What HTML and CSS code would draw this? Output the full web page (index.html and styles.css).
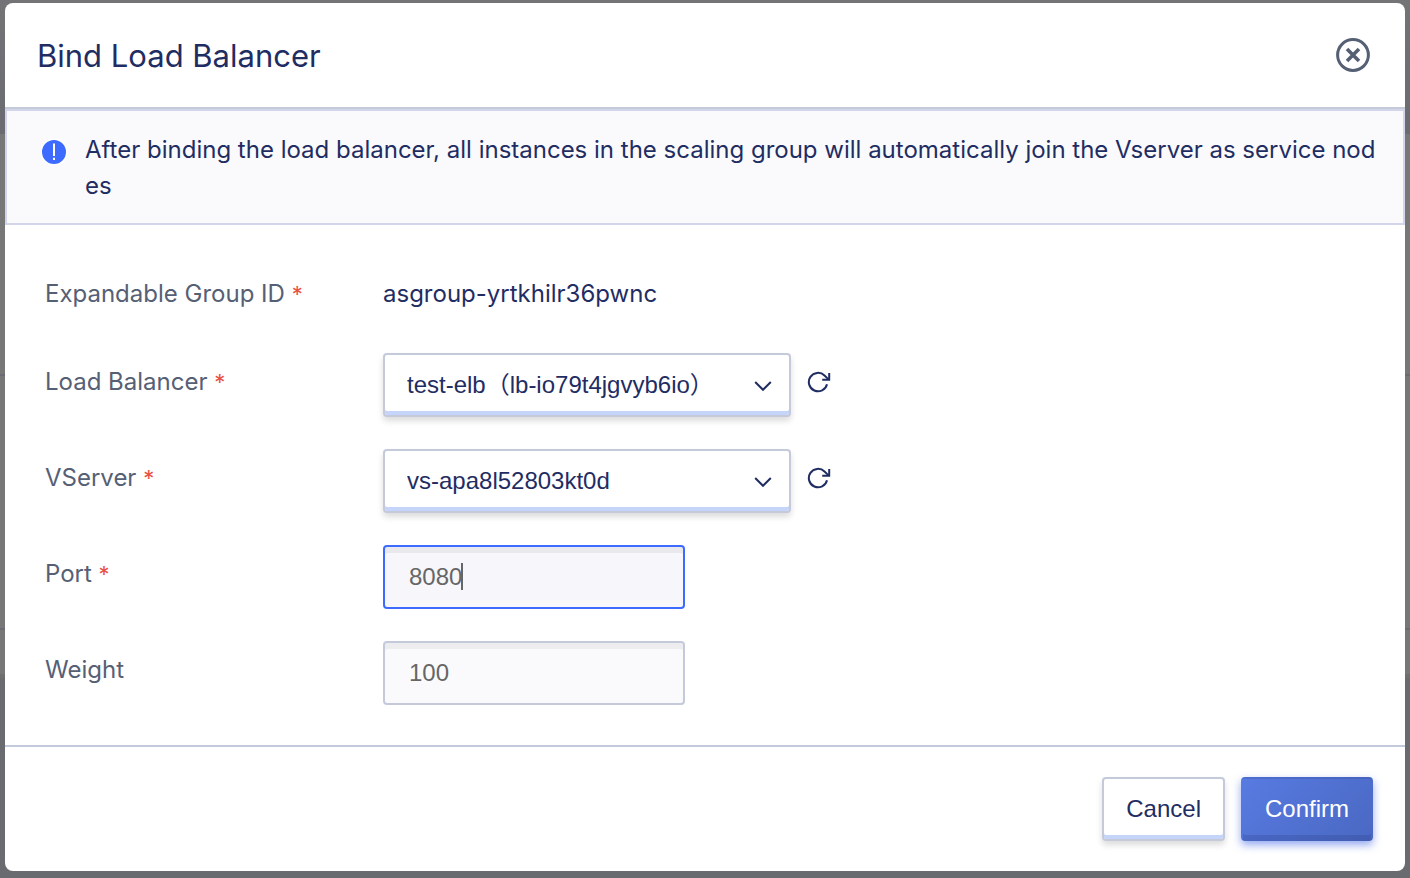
FILE: index.html
```html
<!DOCTYPE html>
<html lang="en">
<head>
<meta charset="utf-8">
<meta name="viewport" content="width=device-width, initial-scale=1">
<title>Bind Load Balancer</title>
<link rel="stylesheet" href="styles.css">
</head>
<body>
<main class="dialog" role="dialog" aria-labelledby="dialog-title">
  <header class="dialog-header">
    <h1 class="dialog-title" id="dialog-title">Bind Load Balancer</h1>
    <button class="icon-button" type="button" aria-label="Close">
      <svg class="close-icon" viewBox="0 0 34 34" aria-hidden="true"><circle cx="17" cy="17" r="15.4"/><path class="close-cross" d="M11 11 L23 23 M23 11 L11 23"/></svg>
    </button>
  </header>
  <div class="notice">
    <svg class="notice-icon" viewBox="0 0 26 26" aria-hidden="true"><circle cx="13" cy="13" r="13"/><path d="M13 4.500 V17"/><path d="M13 18.7 V21"/></svg>
    <p class="notice-text">After binding the load balancer, all instances in the scaling group will automatically join the Vserver as service nodes</p>
  </div>
  <form class="form" id="bind-form">
    <div class="row">
      <span class="label">Expandable Group ID <span class="required">*</span></span>
      <span class="value">asgroup-yrtkhilr36pwnc</span>
    </div>
    <div class="row">
      <label class="label" for="balancer">Load Balancer <span class="required">*</span></label>
      <div class="control">
        <div class="select-box">
          <select class="select" id="balancer"><option>test-elb（lb-io79t4jgvyb6io）</option></select>
          <svg class="chevron" viewBox="0 0 18 12" aria-hidden="true"><path d="M1.200 2 L9 9.800 L16.800 2"/></svg>
        </div>
        <button class="icon-button refresh" type="button" aria-label="Refresh load balancers">
          <svg class="refresh-icon" viewBox="0 0 24 22" aria-hidden="true"><path d="M20 13.200 A9.200 9.200 0 1 1 17.500 4.500 L21.800 8.600"/><path d="M22.200 2 V8.800 H15.200"/></svg>
        </button>
      </div>
    </div>
    <div class="row">
      <label class="label" for="vserver">VServer <span class="required">*</span></label>
      <div class="control">
        <div class="select-box">
          <select class="select" id="vserver"><option>vs-apa8l52803kt0d</option></select>
          <svg class="chevron" viewBox="0 0 18 12" aria-hidden="true"><path d="M1.200 2 L9 9.800 L16.800 2"/></svg>
        </div>
        <button class="icon-button refresh" type="button" aria-label="Refresh VServers">
          <svg class="refresh-icon" viewBox="0 0 24 22" aria-hidden="true"><path d="M20 13.200 A9.200 9.200 0 1 1 17.500 4.500 L21.800 8.600"/><path d="M22.200 2 V8.800 H15.200"/></svg>
        </button>
      </div>
    </div>
    <div class="row">
      <label class="label" for="port">Port <span class="required">*</span></label>
      <div class="input-box">
        <input class="input input-active" id="port" type="text" value="8080">
        <span class="caret" aria-hidden="true"></span>
      </div>
    </div>
    <div class="row">
      <label class="label" for="weight">Weight</label>
      <div class="input-box"><input class="input" id="weight" type="text" value="100"></div>
    </div>
  </form>
  <footer class="dialog-footer">
    <button class="button" type="button">Cancel</button>
    <button class="button button-primary" type="submit" form="bind-form">Confirm</button>
  </footer>
</main>
</body>
</html>
```
FILE: styles.css
```css
* { box-sizing: border-box; }

body {
  margin: 0;
  min-height: 100vh;
  padding: 3px 5px 7px;
  color: #1f2d63;
  font: 24px/36px Inter, "Noto Sans CJK SC", sans-serif;
  background: linear-gradient(#747477, #6a6b70 134px, #777 134px 374px, #6b6b73 374px 376px, #777 376px 628px, #6b6b73 628px 630px, #777 630px 674px, #6f6f6f 674px 678px, #6a6b6f 678px);
}

.dialog {
  display: flex;
  flex-direction: column;
  min-height: calc(100vh - 10px);
  background: #fff;
  border-radius: 8px;
}

.dialog-header {
  display: flex;
  align-items: center;
  justify-content: space-between;
  height: 106px;
  padding: 0 35px 0 32px;
  border-bottom: 2px solid #c5cad9;
}

.dialog-title {
  margin: 0;
  padding-top: 2px;
  font-size: 31px;
  font-weight: 400;
  line-height: 40px;
}

.icon-button {
  display: flex;
  padding: 0;
  border: 0;
  background: none;
  color: inherit;
}

.close-icon {
  width: 34px;
  height: 34px;
  fill: none;
  stroke: #566075;
  stroke-width: 3;
}

.close-cross { stroke-width: 3.6; }

.notice {
  display: flex;
  gap: 18px;
  padding: 21px 24px 19px 34px;
  background: #fafafc;
  border: 2px solid #d3d6ea;
}

.notice-icon {
  flex: none;
  width: 26px;
  height: 26px;
  margin-top: 7px;
  fill: #3d6bff;
  stroke: #fff;
  stroke-width: 2;
}

.notice-text {
  margin: 0;
  word-break: break-all;
}

.form {
  display: flex;
  flex-direction: column;
  gap: 32px;
  flex: 1;
  padding: 40px;
}

.row { display: flex; }

.label,
.value {
  padding-top: 2px;
  line-height: 54px;
}

.label {
  flex: none;
  width: 338px;
  color: #566075;
}

.required {
  color: #e8503f;
  font-size: 22px;
  line-height: 1;
}

.control {
  display: flex;
  gap: 16px;
}

.select-box,
.input-box { position: relative; }

.select {
  display: block;
  width: 408px;
  height: 64px;
  padding: 0 56px 2px 22px;
  appearance: none;
  color: inherit;
  font: 24px "Liberation Sans", "Noto Sans CJK SC", sans-serif;
  background: #fff;
  border: 2px solid #c5cadb;
  border-radius: 4px;
  box-shadow: inset 0 -4px #c5d4f9, 0 4px 6px rgba(0, 0, 0, .14);
}

.chevron {
  position: absolute;
  top: 27px;
  right: 19px;
  width: 18px;
  height: 12px;
  fill: none;
  stroke: #1f2d63;
  stroke-width: 2;
  pointer-events: none;
}

.refresh {
  align-items: center;
  height: 58px;
}

.refresh-icon {
  width: 24px;
  height: 22px;
  fill: none;
  stroke: #1f2d63;
  stroke-width: 2;
}

.input {
  display: block;
  width: 302px;
  height: 64px;
  padding: 0 24px;
  color: #666;
  font: 24px "Liberation Sans", sans-serif;
  background: #fafafc;
  border: 2px solid #c5cadb;
  border-radius: 4px;
  box-shadow: inset 0 6px #ededef;
}

.input-active {
  background: #f6f6fb;
  border-color: #3d6bff;
  box-shadow: inset 0 6px #e9e9ed;
}

.caret {
  position: absolute;
  top: 18px;
  left: 78px;
  width: 2px;
  height: 27px;
  background: #666;
}

.dialog-footer {
  display: flex;
  justify-content: flex-end;
  gap: 16px;
  padding: 30px 32px;
  border-top: 2px solid #c3cadb;
}

.button {
  height: 64px;
  padding: 0 22px;
  color: #1f2d63;
  font: 24px "Liberation Sans", sans-serif;
  background: #fff;
  border: 2px solid #c5cadb;
  border-radius: 4px;
  box-shadow: inset 0 -4px #c5d4f9, 0 4px 6px rgba(0, 0, 0, .14);
}

.button-primary {
  color: #fff;
  background: linear-gradient(135deg, #587be2, #4a68c2) border-box;
  border-color: rgba(40, 60, 130, .2) transparent rgba(40, 60, 130, .25);
  box-shadow: inset 0 -4px rgba(40, 60, 130, .25), 0 4px 8px rgba(61, 96, 230, .55);
}
```
